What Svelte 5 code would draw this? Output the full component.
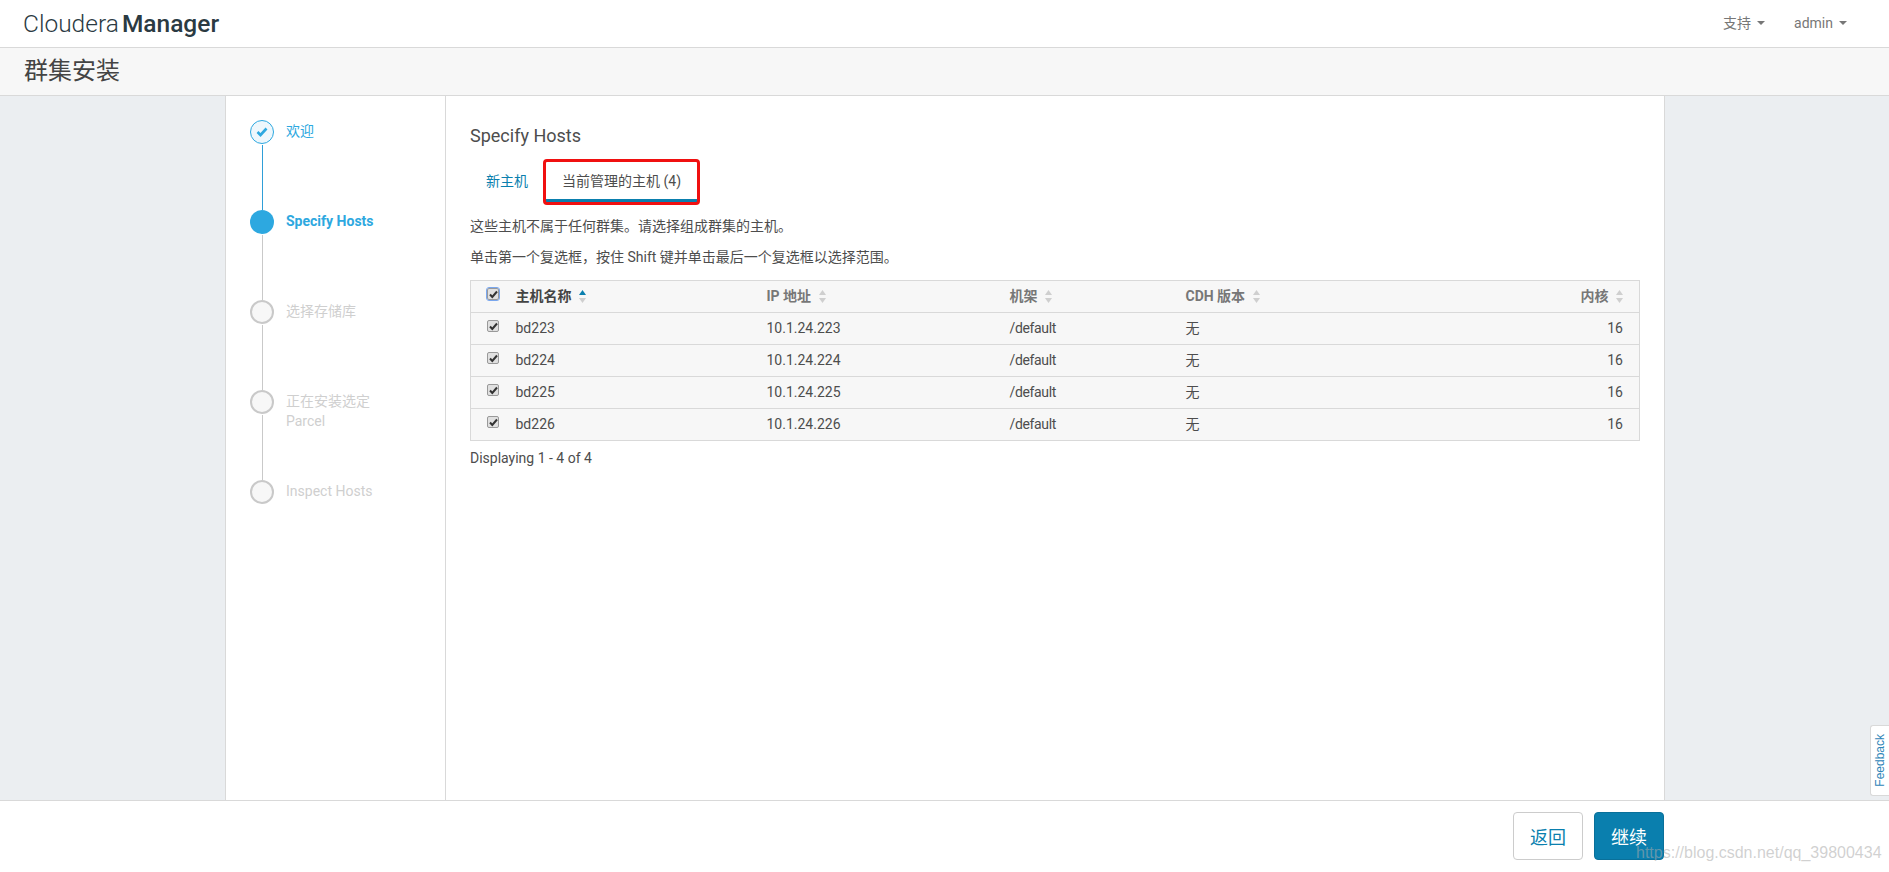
<script>
  const hosts = [223, 224, 225, 226];
  const steps = [
    { label: '欢迎', state: 'done' },
    { label: 'Specify Hosts', state: 'active' },
    { label: '选择存储库', state: 'todo' },
    { label: '正在安装选定 Parcel', state: 'todo' },
    { label: 'Inspect Hosts', state: 'todo' }
  ];
</script>

{#snippet sort(active)}
  <svg class="sort" width="7" height="13" viewBox="0 0 7 13">
    <path d="M3.5 0 7 5H0z" fill={active ? '#0a7fae' : '#cfcfcf'} />
    <path d="M0 8h7l-3.500 5z" fill="#cfcfcf" />
  </svg>
{/snippet}

{#snippet check(head)}
  <span class="cb" class:head>
    <svg width="11" height="11" viewBox="0 0 11 11"><path d="M2 5.500 4.300 8 9 2.500" fill="none" stroke="#333" stroke-width="2" /></svg>
  </span>
{/snippet}

<div class="page">
  <header class="top">
    <div class="logo"><span class="thin">Cloudera</span> <b>Manager</b></div>
    <nav class="menu">
      <span class="mi">支持<i class="caret"></i></span>
      <span class="mi">admin<i class="caret"></i></span>
    </nav>
  </header>
  <div class="titlebar"><h1>群集安装</h1></div>

  <main class="main">
    <aside class="side">
      {#each steps as s, i}
        <div class="step {s.state}">
          <div class="rail">
            <span class="dot">
              {#if s.state === 'done'}
                <svg width="12" height="10" viewBox="0 0 12 10"><path d="M1.500 5 4.500 8 10.500 1.500" fill="none" stroke="#2da8e0" stroke-width="2.600" /></svg>
              {/if}
            </span>
            {#if i < steps.length - 1}<span class="line"></span>{/if}
          </div>
          <div class="label">{s.label}</div>
        </div>
      {/each}
    </aside>

    <section class="content">
      <h2>Specify Hosts</h2>
      <div class="tabs">
        <span class="tab">新主机</span>
        <span class="tab current">当前管理的主机 (4)</span>
        <span class="redbox"></span>
      </div>
      <p class="p1">这些主机不属于任何群集。请选择组成群集的主机。</p>
      <p class="p2">单击第一个复选框，按住 Shift 键并单击最后一个复选框以选择范围。</p>
      <table>
        <colgroup><col class="c0" /><col class="c1" /><col class="c2" /><col class="c3" /><col class="c4" /><col /></colgroup>
        <thead>
          <tr>
            <th class="chk">{@render check(true)}</th>
            <th class="dark">主机名称 {@render sort(true)}</th>
            <th>IP 地址 {@render sort(false)}</th>
            <th>机架 {@render sort(false)}</th>
            <th>CDH 版本 {@render sort(false)}</th>
            <th class="num">内核 {@render sort(false)}</th>
          </tr>
        </thead>
        <tbody>
          {#each hosts as h}
            <tr>
              <td class="chk">{@render check(false)}</td>
              <td>bd{h}</td>
              <td>10.1.24.{h}</td>
              <td class="rack">/default</td>
              <td>无</td>
              <td class="num">16</td>
            </tr>
          {/each}
        </tbody>
      </table>
      <div class="count">Displaying 1 - 4 of 4</div>
    </section>
  </main>

  <footer class="foot">
    <button class="btn back">返回</button>
    <button class="btn next">继续</button>
  </footer>

  <div class="feedback"><span>Feedback</span></div>
  <div class="mark">https://blog.csdn.net/qq_39800434</div>
</div>

<style>
  :global(body) { margin: 0; background: #fff; }
  .page {
    position: relative;
    height: 872px;
    overflow: hidden;
    display: flex;
    flex-direction: column;
    font-family: Roboto, "Noto Sans CJK SC", sans-serif;
    font-size: 14px;
    color: #4d4d4d;
  }
  .top {
    height: 47px;
    flex: none;
    box-sizing: content-box;
    border-bottom: 1px solid #d9d9d9;
    display: flex;
    align-items: center;
    justify-content: space-between;
    padding: 0 42px 0 23px;
  }
  .logo { font-size: 24.500px; color: #2b3a42; line-height: 47px; }
  .logo .thin { font-weight: 300; }
  .logo b { font-weight: 500; margin-left: -3px; }
  .menu { display: flex; gap: 29px; color: #777; line-height: 20px; margin-top: -2px; }
  .mi { display: inline-flex; align-items: center; gap: 6px; }
  .caret { width: 0; height: 0; border: 4px solid transparent; border-top-color: #777; border-bottom: 0; }
  .titlebar {
    height: 47px;
    flex: none;
    background: #f7f7f7;
    border-bottom: 1px solid #d9d9d9;
    display: flex;
    align-items: center;
    padding-left: 24px;
  }
  h1 { margin: 0; font-size: 24px; font-weight: 400; color: #444; line-height: 47px; }
  .main {
    flex: 1;
    min-height: 0;
    display: flex;
    background: #ebeef1;
    padding-left: 225px;
    padding-right: 224px;
  }
  .side {
    flex: none;
    background: #fff;
    border-left: 1px solid #d9d9d9;
    border-right: 1px solid #d9d9d9;
    padding: 24px 0 0 24px;
    box-sizing: content-box;
    width: 195px;
  }
  .step { display: flex; height: 90px; gap: 12px; }
  .rail { width: 24px; display: flex; flex-direction: column; align-items: center; flex: none; }
  .dot {
    width: 24px;
    height: 24px;
    box-sizing: border-box;
    border-radius: 50%;
    flex: none;
    display: flex;
    align-items: center;
    justify-content: center;
  }
  .done .dot { border: 1px solid #2da8e0; background: #eef7fc; }
  .active .dot { background: #2da8e0; }
  .todo .dot { border: 2px solid #c9c9c9; background: #f7f7f7; }
  .line { width: 1px; flex: 1; margin-top: 1px; background: #c9c9c9; }
  .done .line { background: #2f9fd8; }
  .label { width: 110px; line-height: 20px; font-size: 14px; padding-top: 1px; }
  .done .label { color: #2da8e0; }
  .active .label { color: #2da8e0; font-weight: 700; }
  .todo .label { color: #cfcfcf; }
  .content {
    flex: 1;
    min-width: 0;
    background: #fff;
    padding: 0 24px;
    border-right: 1px solid #d9d9d9;
  }
  h2 { margin: 30px 0 0; font-size: 18px; font-weight: 400; line-height: 20px; color: #4d4d4d; }
  .tabs { position: relative; display: flex; margin-top: 16px; height: 40px; gap: 2px; }
  .tab { padding: 0 16px; line-height: 38px; color: #0a7fae; }
  .tab.current { color: #4d4d4d; border-bottom: 3px solid #0a7fae; height: 37px; }
  .redbox {
    position: absolute;
    left: 73px;
    top: -3px;
    width: 151px;
    height: 40px;
    border: 3px solid #f01010;
    border-radius: 4px;
  }
  p { margin: 0; line-height: 20px; }
  .p1 { margin-top: 14px; }
  .p2 { margin-top: 11px; }
  table {
    margin-top: 13px;
    width: 100%;
    table-layout: fixed;
    border-collapse: collapse;
    background: #f7f7f7;
    border: 1px solid #d9d9d9;
  }
  .c0 { width: 37px; }
  .c1 { width: 251px; }
  .c2 { width: 243px; }
  .c3 { width: 176px; }
  .c4 { width: 300px; }
  tr { height: 32px; border-bottom: 1px solid #d9d9d9; }
  th, td {
    padding: 0 8px 2px;
    text-align: left;
    font-weight: 400;
    white-space: nowrap;
    box-sizing: border-box;
    line-height: 20px;
  }
  th { font-weight: 700; color: #777; }
  th.dark { color: #444; }
  .rack { letter-spacing: -0.35px; }
  .num { text-align: right; padding-right: 16px; }
  .chk { padding: 0 0 0 16px; overflow: visible; }
  .sort { margin-left: 4px; vertical-align: -2px; }
  .cb {
    display: block;
    width: 12px;
    height: 12px;
    box-sizing: border-box;
    border: 1px solid #999;
    border-radius: 2px;
    background: #e0e0e0;
    position: relative;
    margin-top: -6px;
  }
  .cb svg { display: block; }
  .cb.head { outline: 1.500px solid #7aa7ee; }
  .count { margin-top: 7px; line-height: 20px; }
  .foot {
    height: 72px;
    flex: none;
    box-sizing: border-box;
    border-top: 1px solid #d9d9d9;
    background: #fff;
    display: flex;
    justify-content: flex-end;
    gap: 11px;
    padding: 11px 225px 0 0;
  }
  .btn {
    width: 70px;
    height: 48px;
    border-radius: 4px;
    font-family: inherit;
    font-size: 18px;
    padding: 0;
  }
  .back { background: #fff; border: 1px solid #ccc; color: #0a7fae; }
  .next { background: #0a7fae; border: 1px solid #09709a; color: #fff; }
  .feedback {
    position: absolute;
    right: 0;
    top: 725px;
    width: 18px;
    height: 69px;
    background: #fff;
    border: 1px solid #d9d9d9;
    border-right: 0;
    border-radius: 3px 0 0 3px;
    display: flex;
    align-items: center;
    justify-content: center;
  }
  .feedback span {
    writing-mode: vertical-rl;
    transform: rotate(180deg);
    font-size: 12px;
    color: #2f86b8;
    font-family: "Liberation Sans", sans-serif;
  }
  .mark {
    position: absolute;
    left: 1636px;
    top: 844px;
    font-family: "Liberation Sans", sans-serif;
    font-size: 16px;
    line-height: 18px;
    color: rgba(170, 170, 170, 0.55);
    white-space: nowrap;
  }
</style>
